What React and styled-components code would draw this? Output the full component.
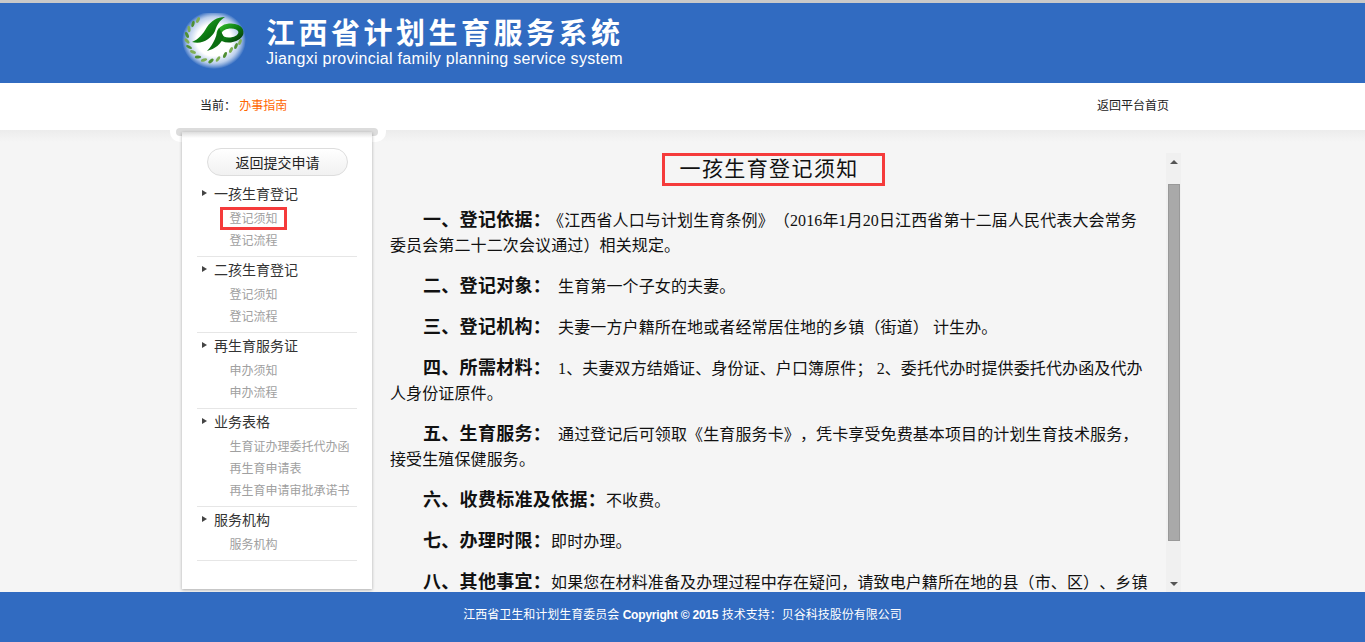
import styled, { createGlobalStyle } from "styled-components"

const menu = [
    { title: "一孩生育登记", links: ["登记须知", "登记流程"], marked: "登记须知" },
    { title: "二孩生育登记", links: ["登记须知", "登记流程"] },
    { title: "再生育服务证", links: ["申办须知", "申办流程"] },
    { title: "业务表格", links: ["生育证办理委托代办函", "再生育申请表", "再生育申请审批承诺书"] },
    { title: "服务机构", links: ["服务机构"] },
]

const notes = [
    { head: "一、登记依据：", gap: -3, body: "《江西省人口与计划生育条例》（2016年1月20日江西省第十二届人民代表大会常务委员会第二十二次会议通过）相关规定。" },
    { head: "二、登记对象：", gap: 7, body: "生育第一个子女的夫妻。" },
    { head: "三、登记机构：", gap: 7, body: "夫妻一方户籍所在地或者经常居住地的乡镇（街道） 计生办。" },
    { head: "四、所需材料：", gap: 7, body: "1、夫妻双方结婚证、身份证、户口簿原件； 2、委托代办时提供委托代办函及代办人身份证原件。" },
    { head: "五、生育服务：", gap: 7, body: "通过登记后可领取《生育服务卡》，凭卡享受免费基本项目的计划生育技术服务，接受生殖保健服务。" },
    { head: "六、收费标准及依据：", gap: 0, body: "不收费。" },
    { head: "七、办理时限：", gap: 0, body: "即时办理。" },
    { head: "八、其他事宜：", gap: 0, body: "如果您在材料准备及办理过程中存在疑问，请致电户籍所在地的县（市、区）、乡镇" },
]

const leaves = [[16, 7], [11, 11], [7, 16], [5, 22], [5, 28], [7, 34], [11, 39], [16, 44], [22, 47], [29, 48], [36, 46], [43, 42], [49, 37], [54, 33], [58, 29]]

export default function App() {
    return (
        <Page lang="zh-CN">
            <GlobalStyle />
            <Header>
                <HeaderInner>
                    <Logo />
                    <Brand>
                        <BrandName>江西省计划生育服务系统</BrandName>
                        <BrandEnglish>Jiangxi provincial family planning service system</BrandEnglish>
                    </Brand>
                </HeaderInner>
            </Header>
            <CrumbBar>
                <CrumbInner>
                    <span>当前： <CrumbCurrent>办事指南</CrumbCurrent></span>
                    <span>返回平台首页</span>
                </CrumbInner>
            </CrumbBar>
            <Main>
                <MainInner>
                    <Sidebar>
                        <SidePanel>
                            <BackButton>返回提交申请</BackButton>
                            {menu.map((group) => (
                                <MenuGroup key={group.title}>
                                    <MenuTitle>{group.title}</MenuTitle>
                                    {group.links.map((link) => (
                                        <MenuRow key={link}>
                                            <MenuLink $marked={group.marked === link}>{link}</MenuLink>
                                        </MenuRow>
                                    ))}
                                </MenuGroup>
                            ))}
                        </SidePanel>
                    </Sidebar>
                    <Article>
                        <ArticleTitleRow>
                            <ArticleTitle>一孩生育登记须知</ArticleTitle>
                        </ArticleTitleRow>
                        {notes.map((note) => (
                            <Note key={note.head}>
                                <NoteHead $gap={note.gap}>{note.head}</NoteHead>
                                {note.body}
                            </Note>
                        ))}
                    </Article>
                    <ScrollRail>
                        <UpArrow />
                        <ScrollThumb />
                        <DownArrow />
                    </ScrollRail>
                </MainInner>
            </Main>
            <Footer>
                江西省卫生和计划生育委员会 <FooterLatin>Copyright © 2015</FooterLatin> 技术支持：贝谷科技股份有限公司
            </Footer>
        </Page>
    )
}

function Logo() {
    return (
        <svg width="64" height="58" viewBox="0 0 64 58">
            <defs>
                <radialGradient id="glow">
                    <stop offset="0.55" stopColor="#ffffff" />
                    <stop offset="0.8" stopColor="#dfe9f7" stopOpacity="0.8" />
                    <stop offset="1" stopColor="#ffffff" stopOpacity="0" />
                </radialGradient>
                <linearGradient id="leaf" x1="0" y1="0" x2="1" y2="1">
                    <stop offset="0" stopColor="#2fb52a" />
                    <stop offset="0.55" stopColor="#0c7a12" />
                    <stop offset="1" stopColor="#05400a" />
                </linearGradient>
            </defs>
            <ellipse cx="32" cy="27" rx="32" ry="29" fill="url(#glow)" />
            {leaves.map(([x, y], i) => {
                const next = leaves[i + 1] || [x + 3, y - 3]
                const angle = Math.atan2(next[1] - y, next[0] - x) * 180 / Math.PI
                return <ellipse key={i} cx={x} cy={y} rx="3.2" ry="1.5" fill={i % 2 ? "#4f8f33" : "#7fae55"} transform={`rotate(${angle - 25} ${x} ${y})`} />
            })}
            <path d="M10 29C17 26 21 21 25 14 29 8 35 4 43 4 37 8 35 12 33 18 29 26 20 32 10 29z" fill="url(#leaf)" />
            <ellipse cx="48" cy="20" rx="11" ry="7" fill="none" stroke="url(#leaf)" strokeWidth="5" transform="rotate(-6 48 20)" />
            <path d="M37 15C34 22 33 30 25 38 33 36 39 31 42 24z" fill="#0c6f12" />
        </svg>
    )
}

const GlobalStyle = createGlobalStyle`
    html, body {
        margin: 0;
        padding: 0;
        height: 100%;
    }

    body {
        font-family: "Liberation Sans", "Noto Sans CJK SC", sans-serif;
        overflow: hidden;
        text-spacing-trim: space-all;
    }
`

const Page = styled.div`
    display: flex;
    flex-direction: column;
    height: 642px;
    overflow: hidden;
`

const Header = styled.header`
    height: 80px;
    flex: none;
    background-color: #316bc1;
    border-top: 3px solid #c9c9c9;
`

const HeaderInner = styled.div`
    width: 1001px;
    margin: 0 auto;
    padding: 10px 0 0 0;
    display: flex;
    gap: 20px;
`

const Brand = styled.div`
    display: flex;
    flex-direction: column;
    color: #ffffff;
`

const BrandName = styled.div`
    font-family: "Noto Sans CJK SC", sans-serif;
    font-size: 29px;
    font-weight: 700;
    line-height: 37px;
    letter-spacing: 3.5px;
    white-space: nowrap;
`

const BrandEnglish = styled.div`
    font-size: 16px;
    line-height: 18px;
    letter-spacing: 0.28px;
    white-space: nowrap;
`

const CrumbBar = styled.div`
    height: 47px;
    flex: none;
    background-color: #ffffff;
`

const CrumbInner = styled.div`
    width: 1001px;
    margin: 0 auto;
    padding: 0 14px 0 18px;
    box-sizing: border-box;
    height: 42px;
    display: flex;
    align-items: center;
    justify-content: space-between;
    font-size: 12px;
    color: #222222;
`

const CrumbCurrent = styled.span`
    color: #ff6600;
`

const Main = styled.main`
    flex: 1;
    min-height: 0;
    background: linear-gradient(#ececec, #f5f5f5 12px);
`

const MainInner = styled.div`
    width: 1001px;
    height: 100%;
    margin: 0 auto;
    display: flex;
`

const Sidebar = styled.aside`
    position: relative;
    flex: none;
    width: 190px;
    height: 457px;
    margin-top: 2px;

    &::before {
        content: "";
        position: absolute;
        top: -2px;
        left: -12px;
        width: 216px;
        height: 12px;
        background-color: #ffffff;
        border-radius: 0 0 10px 10px;
    }

    &::after {
        content: "";
        position: absolute;
        top: -4px;
        left: -6px;
        width: 202px;
        height: 8px;
        background-color: #dcdcdc;
        border-radius: 4px;
    }
`

const SidePanel = styled.div`
    position: relative;
    z-index: 1;
    height: 100%;
    padding: 16px 15px 0;
    box-sizing: border-box;
    background: linear-gradient(#dddddd, #ffffff 6px);
    box-shadow: 0 1px 3px rgba(0, 0, 0, 0.3);
`

const BackButton = styled.button`
    display: block;
    width: 141px;
    height: 28px;
    margin: 0 0 5px 10px;
    padding: 0;
    border: 1px solid #dddddd;
    border-radius: 14px;
    background: linear-gradient(#ffffff, #f1f1f1);
    font-family: "Noto Sans CJK SC", sans-serif;
    font-size: 14px;
    color: #222222;
`

const MenuGroup = styled.div`
    padding-bottom: 5px;
    border-bottom: 1px solid #e6e6e6;
`

const MenuTitle = styled.div`
    position: relative;
    height: 26px;
    padding-left: 17px;
    line-height: 26px;
    font-size: 14px;
    color: #333333;

    &::before {
        content: "";
        position: absolute;
        left: 5px;
        top: 9px;
        border-style: solid;
        border-width: 3.5px 0 3.5px 5px;
        border-color: transparent transparent transparent #444444;
    }
`

const MenuRow = styled.div`
    height: 22px;
    padding-left: 32.5px;
    line-height: 24px;
    font-size: 12px;
    color: #a0a0a0;
`

const MenuLink = styled.span`
    position: relative;
    display: inline-block;

    ${(props) => props.$marked && `
        &::after {
            content: "";
            position: absolute;
            top: 0;
            left: -9.5px;
            right: -9px;
            bottom: 1px;
            border: 3px solid #f53b3b;
        }
    `}
`

const Article = styled.article`
    flex: none;
    width: 766px;
    height: 439px;
    margin: 23px 0 0 18px;
    overflow: hidden;
    font-family: "Liberation Serif", "Noto Sans CJK SC", serif;
    font-size: 16px;
    line-height: 25px;
    letter-spacing: 0.12px;
    color: #111111;
`

const ArticleTitleRow = styled.div`
    display: flex;
    justify-content: center;
    margin-bottom: 22px;
`

const ArticleTitle = styled.h1`
    margin: 0;
    width: 223px;
    height: 33px;
    padding-left: 15px;
    box-sizing: border-box;
    border: 3px solid #f53b3b;
    font-size: 21px;
    font-weight: 400;
    line-height: 27px;
    letter-spacing: 1.4px;
    white-space: nowrap;
`

const Note = styled.p`
    margin: 0 0 16px;
    padding-right: 7px;
    text-indent: 33px;
`

const NoteHead = styled.strong`
    margin-right: ${(props) => props.$gap}px;
    font-size: 18px;
    letter-spacing: 0.3px;
`

const ScrollRail = styled.div`
    flex: none;
    width: 15px;
    height: 439px;
    margin: 23px 0 0 10px;
    background-color: #f0f0f0;
    display: flex;
    flex-direction: column;
    align-items: center;
`

const UpArrow = styled.div`
    margin-top: 7px;
    border-style: solid;
    border-width: 0 4px 4px;
    border-color: transparent transparent #555555;
`

const DownArrow = styled.div`
    margin-top: 41px;
    border-style: solid;
    border-width: 4px 4px 0;
    border-color: #555555 transparent transparent;
`

const ScrollThumb = styled.div`
    width: 12px;
    height: 357px;
    margin-top: 20px;
    box-sizing: border-box;
    background-color: #a9a9a9;
    border: 1px solid #999999;
`

const Footer = styled.footer`
    flex: none;
    height: 50px;
    background-color: #316bc1;
    color: #ffffff;
    font-size: 12px;
    line-height: 46px;
    text-align: center;
`

const FooterLatin = styled.span`
    font-weight: 700;
    letter-spacing: -0.2px;
`
